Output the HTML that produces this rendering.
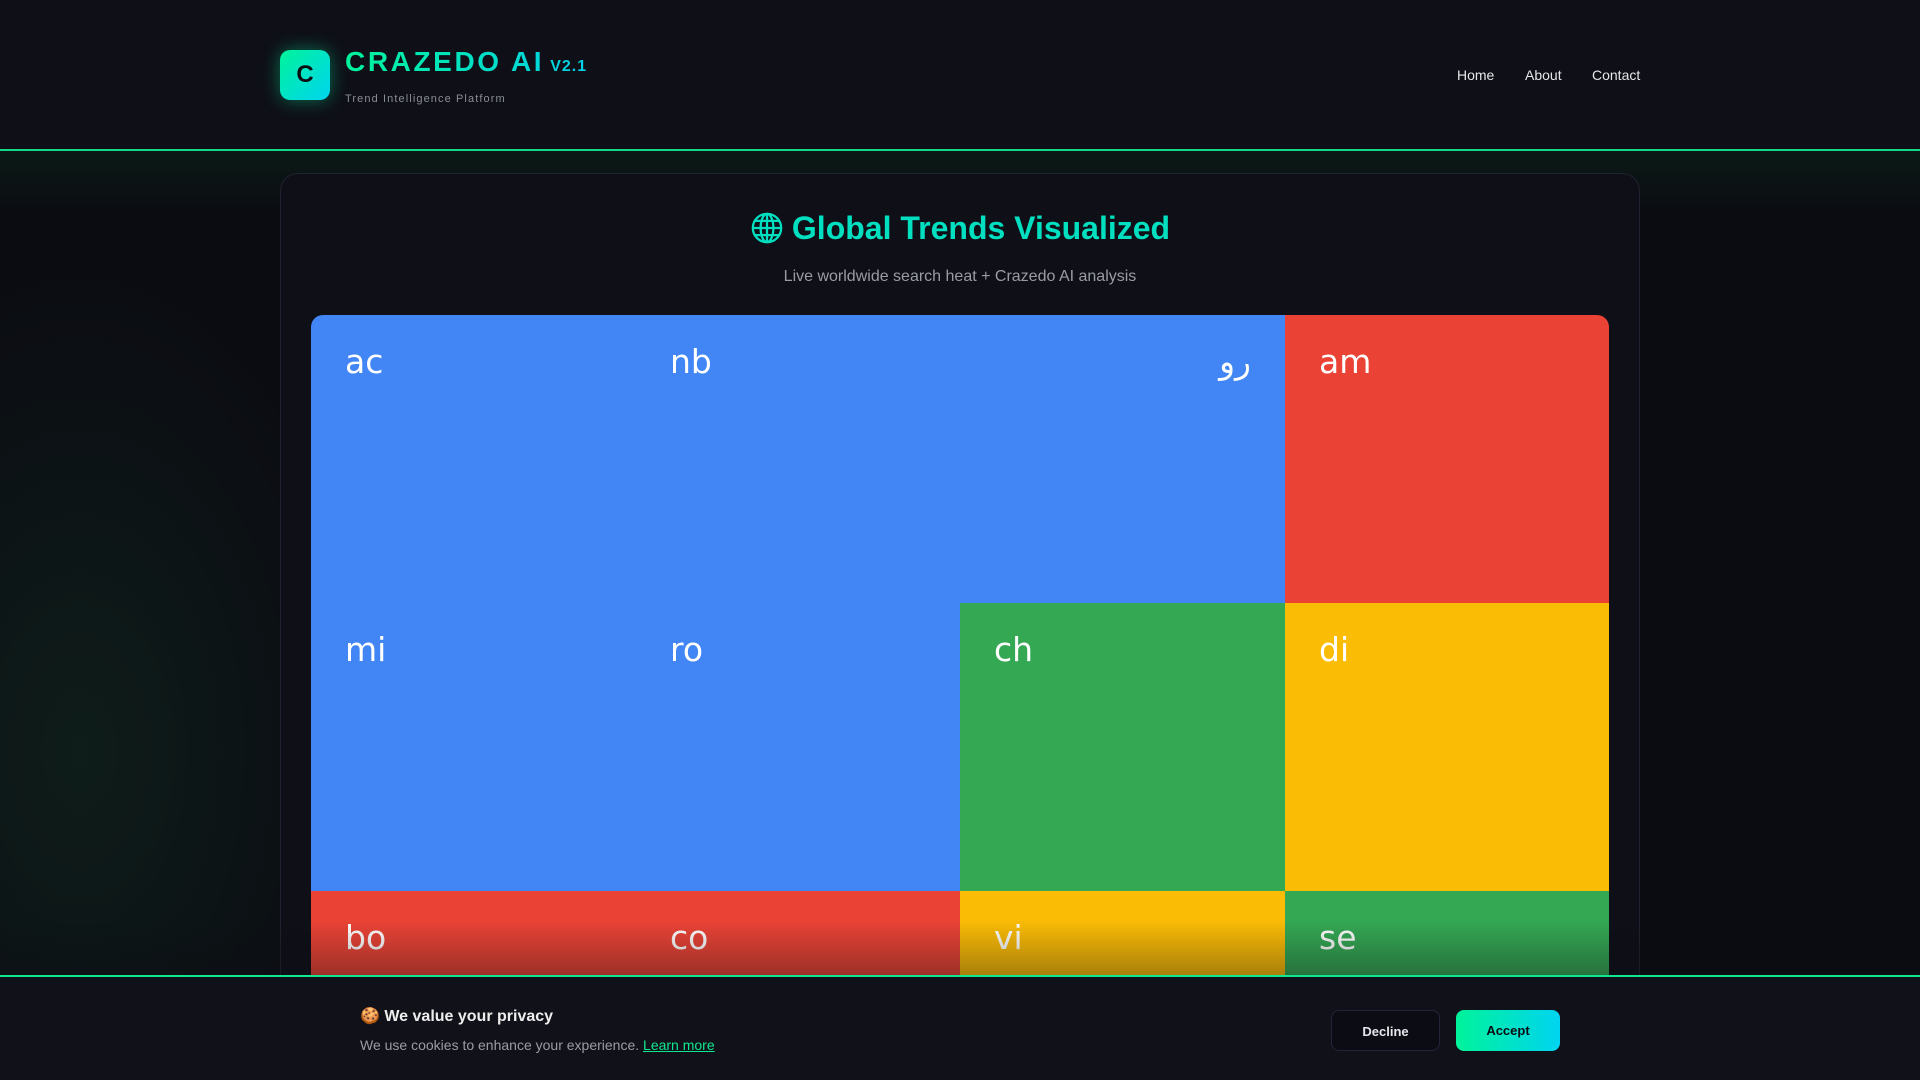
<!DOCTYPE html>
<html style="overflow:hidden;height:1080px"><head><meta charset="utf-8"><style>
*{margin:0;padding:0;box-sizing:border-box}
body{width:1920px;height:1080px;overflow:hidden;background:#0b0c12;font-family:"Liberation Sans",sans-serif;position:relative}
.glow{position:absolute;left:0;top:151px;width:1920px;height:929px;background:radial-gradient(ellipse 420px 700px at 80px 600px,rgba(20,60,40,.35),transparent 70%),linear-gradient(#0b1a16 0,#0b0c12 60px)}
header{position:absolute;left:0;top:0;width:1920px;height:151px;background:#0e0f17;border-bottom:2px solid #10d98a}
.logo{position:absolute;left:280px;top:50px;width:50px;height:50px;border-radius:10px;background:linear-gradient(135deg,#00f39a,#00d4f0);box-shadow:0 0 18px rgba(0,230,150,.45);color:#0b0c12;font-weight:bold;font-size:24px;text-align:center;line-height:50px}
.brand{position:absolute;left:345px;top:46px;font-size:28px;font-weight:bold;letter-spacing:2.6px;background:linear-gradient(90deg,#00f39a,#00d0e8);-webkit-background-clip:text;color:transparent}
.brand small{font-size:16px;letter-spacing:1px;margin-left:6px}
.tag{position:absolute;left:345px;top:93px;font-size:11px;letter-spacing:1.1px;color:#8a8d96}
nav{position:absolute;top:67px;font-size:14px;color:#e6e6ea}
.card{position:absolute;left:280px;top:173px;width:1360px;height:940px;border:1px solid #1f2230;border-radius:18px;background:#0e0f17}
h1{position:absolute;left:0;width:1920px;top:210px;text-align:center;font-size:32px;color:#00e0c0;font-weight:bold}
.sub{position:absolute;left:0;width:1920px;top:268px;text-align:center;font-size:16px;color:#9a9ca4}
.tm{position:absolute;left:311px;top:315px;width:1298px;height:765px;overflow:hidden;border-radius:12px 12px 0 0}
.c{position:absolute;color:#fff;font-size:33px;padding:27px 34px;font-family:"DejaVu Sans",sans-serif}
.B{background:#4285f4}.R{background:#ea4335}.G{background:#34a853}.Y{background:#fbbc05}
.fade{position:absolute;left:0;top:920px;width:1920px;height:56px;background:linear-gradient(rgba(11,12,18,0),rgba(11,12,18,.35))}
.banner{position:absolute;left:0;top:975px;width:1920px;height:105px;background:#111119;border-top:2px solid #10e890}
.btn{position:absolute;top:33px;height:41px;border-radius:8px;font-size:13px;font-weight:bold;text-align:center;line-height:41px}
</style></head><body>
<div class="glow"></div>
<header>
<div class="logo">C</div>
<div class="brand">CRAZEDO AI<small>V2.1</small></div>
<div class="tag">Trend Intelligence Platform</div>
<nav style="left:1457px">Home</nav><nav style="left:1525px">About</nav><nav style="left:1592px">Contact</nav>
</header>
<div class="card"></div>
<h1><svg width="34" height="34" viewBox="0 0 24 24" style="vertical-align:-6px;margin-right:8px" fill="none" stroke="#00e0c0" stroke-width="1.6"><circle cx="12" cy="12" r="10"/><ellipse cx="12" cy="12" rx="4.5" ry="10"/><path d="M2 12h20M3.5 7h17M3.5 17h17M12 2v20"/></svg>Global Trends Visualized</h1>
<div class="sub">Live worldwide search heat + Crazedo AI analysis</div>
<div class="tm">
<div class="c B" style="left:0;top:0;width:325px;height:288px">ac</div>
<div class="c B" style="left:325px;top:0;width:324px;height:288px">nb</div>
<div class="c B" style="left:649px;top:0;width:325px;height:288px;text-align:right">رو</div>
<div class="c R" style="left:974px;top:0;width:324px;height:288px">am</div>
<div class="c B" style="left:0;top:288px;width:325px;height:288px">mi</div>
<div class="c B" style="left:325px;top:288px;width:324px;height:288px">ro</div>
<div class="c G" style="left:649px;top:288px;width:325px;height:288px">ch</div>
<div class="c Y" style="left:974px;top:288px;width:324px;height:288px">di</div>
<div class="c R" style="left:0;top:576px;width:325px;height:204px">bo</div>
<div class="c R" style="left:325px;top:576px;width:324px;height:204px">co</div>
<div class="c Y" style="left:649px;top:576px;width:325px;height:204px">vi</div>
<div class="c G" style="left:974px;top:576px;width:324px;height:204px">se</div>
</div>
<div class="fade"></div>
<div class="banner">
<div style="position:absolute;left:360px;top:29px;font-size:16px;font-weight:bold;color:#eee">🍪 We value your privacy</div>
<div style="position:absolute;left:360px;top:60px;font-size:14px;color:#9a9ca4">We use cookies to enhance your experience. <span style="color:#10e890;text-decoration:underline">Learn more</span></div>
<div class="btn" style="left:1331px;width:109px;border:1px solid #22253a;background:#0b0c14;color:#e6e6ea">Decline</div>
<div class="btn" style="left:1456px;width:104px;background:linear-gradient(90deg,#00f39a,#00d4f0);color:#0b0c12">Accept</div>
</div>
</body></html>
